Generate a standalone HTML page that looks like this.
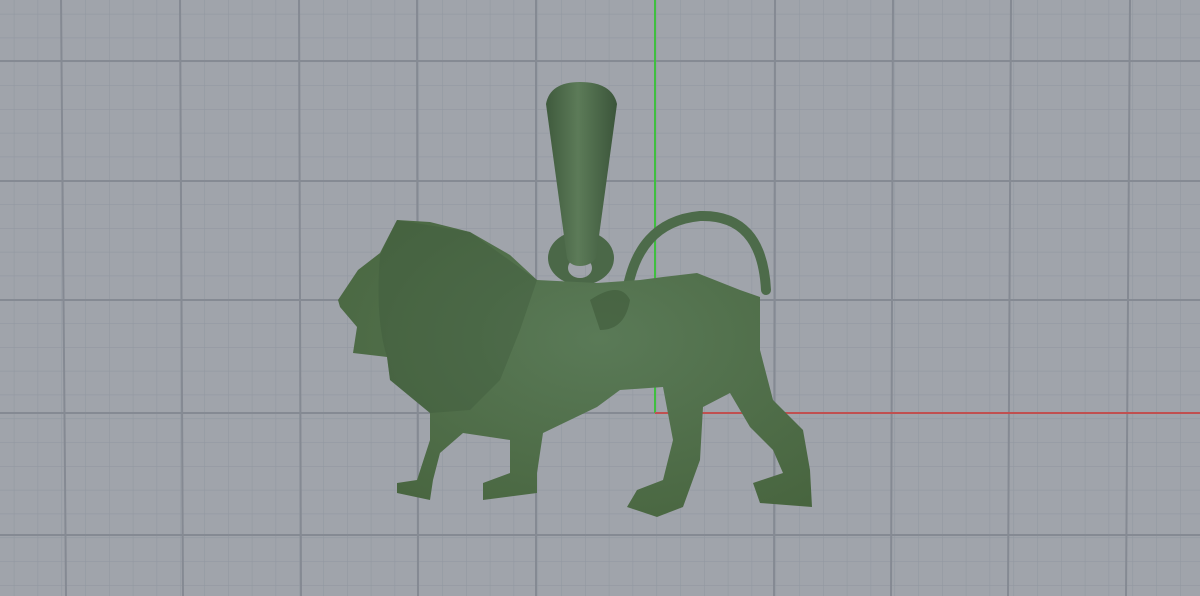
<!DOCTYPE html>
<html><head><style>
html,body{margin:0;padding:0;}
body{width:1200px;height:596px;overflow:hidden;background:#a0a4ab;position:relative;}
svg{position:absolute;left:0;top:0;}
</style></head><body>
<svg width="1200" height="596" viewBox="0 0 1200 596">
<defs>
<pattern id="minor" x="-10" y="-10" width="23.8" height="23.8" patternUnits="userSpaceOnUse">
<path d="M0 0H23.8M0 0V23.8" stroke="#9298a1" stroke-width="1.2" fill="none"/>
</pattern>
<linearGradient id="bail" x1="0" x2="1">
<stop offset="0" stop-color="#3f5a3d"/><stop offset="0.45" stop-color="#5c7b58"/><stop offset="1" stop-color="#3b553a"/>
</linearGradient>
<radialGradient id="body" cx="0.55" cy="0.4" r="0.7">
<stop offset="0" stop-color="#5a7a57"/><stop offset="1" stop-color="#48653f"/>
</radialGradient>
</defs>
<rect width="1200" height="596" fill="url(#minor)"/>
<g stroke="#858a93" stroke-width="2">
<line x1="0" y1="61" x2="1200" y2="61"/>
<line x1="0" y1="181" x2="1200" y2="181"/>
<line x1="0" y1="300" x2="1200" y2="300"/>
<line x1="0" y1="413" x2="655" y2="413"/>
<line x1="0" y1="535" x2="1200" y2="535"/>
<line x1="61" y1="0" x2="66" y2="596"/>
<line x1="180" y1="0" x2="183" y2="596"/>
<line x1="299" y1="0" x2="301" y2="596"/>
<line x1="417" y1="0" x2="418" y2="596"/>
<line x1="536" y1="0" x2="536" y2="596"/>
<line x1="775" y1="0" x2="774" y2="596"/>
<line x1="893" y1="0" x2="891" y2="596"/>
<line x1="1011" y1="0" x2="1008" y2="596"/>
<line x1="1130" y1="0" x2="1126" y2="596"/>
</g>
<line x1="655" y1="0" x2="655" y2="413" stroke="#3fbf3f" stroke-width="2"/>
<line x1="655" y1="413" x2="1200" y2="413" stroke="#c05050" stroke-width="2"/>
<!-- ring -->
<path fill-rule="evenodd" fill="#4b6848" d="M548 258 A33 27 0 1 0 614 258 A33 27 0 1 0 548 258Z M568 268 A12 10 0 1 0 592 268 A12 10 0 1 0 568 268Z"/>
<!-- bail -->
<path d="M546 104 Q550 82 580 82 Q612 82 617 104 L596 258 Q590 266 580 266 Q570 266 567 258 Z" fill="url(#bail)"/>
<!-- tail -->
<path d="M626 298 Q636 222 700 216 Q762 214 766 290" fill="none" stroke="#4d6b4a" stroke-width="10" stroke-linecap="round"/>
<!-- lion -->
<path fill="url(#body)" d="M338 300 L358 270 L380 253 L397 220 L430 222 L470 232 L510 255 L537 280 L597 283 L640 280 L663 277 L697 273 L740 290 L760 297 L760 350 L773 400 L803 430 L810 470 L812 507 L760 503 L753 483 L783 473 L773 450 L750 427 L730 393 L703 407 L700 460 L683 507 L657 517 L627 507 L637 490 L663 480 L673 440 L663 387 L620 390 L597 407 L543 433 L537 473 L537 493 L483 500 L483 483 L510 473 L510 440 L463 433 L440 453 L433 480 L430 500 L397 493 L397 483 L417 480 L430 440 L430 413 L390 380 L387 357 L353 353 L357 327 L340 307 Z"/>
<path d="M380 255 L397 220 L470 232 L537 280 L520 330 L500 380 L470 410 L430 413 L390 380 L387 357 Q375 320 380 255Z" fill="#3f5a3b" opacity="0.4"/>
<path d="M590 300 Q620 280 630 300 Q625 330 600 330Z" fill="#3f5a3b" opacity="0.6"/>
</svg>
</body></html>
